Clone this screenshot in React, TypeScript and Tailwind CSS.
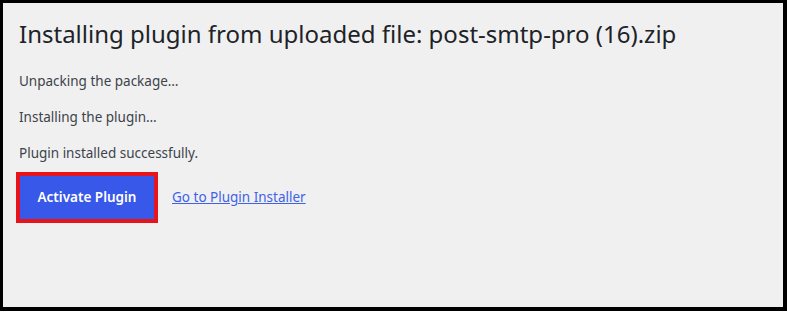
import React from 'react';

const App: React.FC = () => {
  return (
    <div className="w-[787px] h-[312px] bg-white">
      <div
        className="w-[787px] h-[311px] bg-[#f0f0f1] border-l-[3px] border-t-[3px] border-r-4 border-b-4 border-black pl-4 pt-[16px]"
        style={{ fontFamily: '"Noto Sans", "Open Sans", sans-serif' }}
      >
        <h1 className="text-[24px] leading-[30px] text-[#1d2327] font-normal">
          Installing plugin from uploaded file: post-smtp-pro (16).zip
        </h1>

        <div className="mt-[22px] flex flex-col gap-[16px] text-[13.5px] leading-[20px] text-[#3c434a]">
          <p>Unpacking the package&hellip;</p>
          <p>Installing the plugin&hellip;</p>
          <p>Plugin installed successfully.</p>
        </div>

        <div className="mt-[9px] -ml-[3px] flex items-center gap-[14px]">
          <div className="border-4 border-[#e8141c]">
            <button className="w-[134px] h-[43px] bg-[#3858e9] text-white text-[13.5px] font-semibold">
              Activate Plugin
            </button>
          </div>
          <a href="#" className="text-[13.5px] text-[#3f62e8] underline">
            Go to Plugin Installer
          </a>
        </div>
      </div>
    </div>
  );
};

export default App;
